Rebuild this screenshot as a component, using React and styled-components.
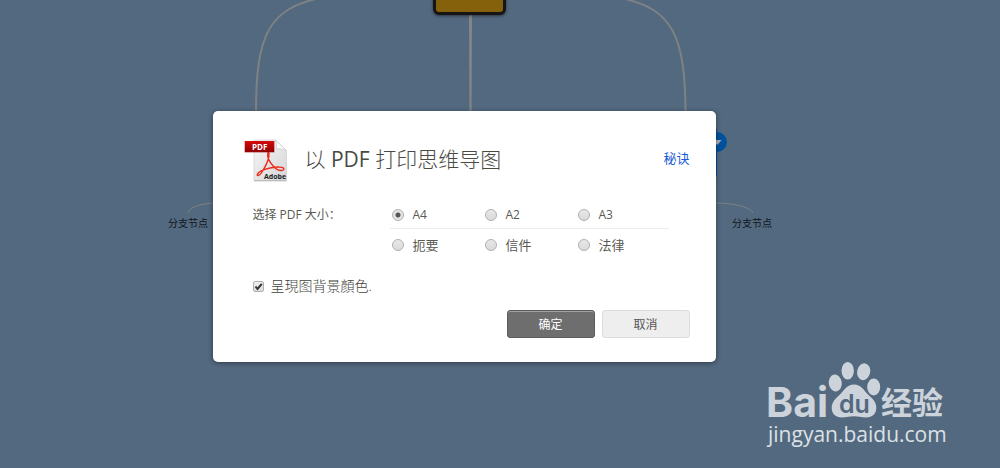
import React, { useState } from "react";
import styled, { createGlobalStyle } from "styled-components";

const SIZES = [
  [
    { value: "a4", label: "A4" },
    { value: "a2", label: "A2" },
    { value: "a3", label: "A3" },
  ],
  [
    { value: "executive", label: "扼要" },
    { value: "letter", label: "信件" },
    { value: "legal", label: "法律" },
  ],
];

const MindMap = () => (
  <MapLayer>
    <svg width="1000" height="468" fill="none" stroke="#7e8284">
      <path d="M320 -2C268 9 256 36 256 112" strokeWidth="2" />
      <path d="M621 -2C673 9 685 36 685.500 112" strokeWidth="2" />
      <path d="M469 12h3l-0.500 100h-2z" fill="#84868a" stroke="none" />
      <path d="M188 213C190 206 202 204 214 203" />
      <path d="M714 203C730 203 750 206 753 213" />
      <rect x="640" y="128" width="77" height="49" rx="3" fill="#00519b" stroke="none" />
      <circle cx="717" cy="142" r="10" fill="#00519b" stroke="none" />
      <path d="M712 140h9.500l-4 5z" fill="#a9adb5" stroke="none" />
    </svg>
    <RootNode />
    <BranchLabel $x={168}>分支节点</BranchLabel>
    <BranchLabel $x={732}>分支节点</BranchLabel>
  </MapLayer>
);

const PdfIcon = () => (
  <svg width="44" height="44" viewBox="244 138 44 44" aria-hidden="true">
    <defs>
      <linearGradient id="page" x1="0" y1="0" x2="1" y2="1">
        <stop offset="0" stopColor="#f6f6f6" />
        <stop offset="1" stopColor="#d6d6d6" />
      </linearGradient>
      <linearGradient id="banner" x1="0" y1="0" x2="0" y2="1">
        <stop offset="0" stopColor="#d60a0a" />
        <stop offset="1" stopColor="#8e0000" />
      </linearGradient>
    </defs>
    <path
      d="M254 140h21.500l11 10.500V180.500H254z"
      fill="url(#page)"
      stroke="#cfcfcf"
      strokeWidth="0.700"
    />
    <path d="M254 180.800h32.500" stroke="#a5a5a5" strokeWidth="0.800" />
    <path
      d="M275.500 140.200q2 5 0.500 8.500q5-0.500 10.300 1.800z"
      fill="#fff"
      stroke="#c4c4c4"
      strokeWidth="0.600"
    />
    <path
      d="M268 152.500C266.500 157 270 163 275 168C279 171.500 283.500 171 283.800 169C284 166.800 277 166.500 270 168C264 169.400 258 172 257.300 174.500C257 176.300 259.500 176 262 172C265.500 166.500 269.500 158 269 153"
      fill="none"
      stroke="#ee2a1c"
      strokeWidth="1.400"
      strokeLinecap="round"
    />
    <rect x="244.700" y="141" width="29.600" height="11.300" fill="url(#banner)" />
    <text
      x="252"
      y="149.500"
      fill="#fff"
      fontFamily="'Open Sans', sans-serif"
      fontSize="8"
      fontWeight="700"
    >
      PDF
    </text>
    <text
      x="264"
      y="179"
      fill="#222"
      fontFamily="'Open Sans', sans-serif"
      fontSize="7"
      fontWeight="700"
    >
      Adobe
    </text>
  </svg>
);

const BaiduMark = () => (
  <Watermark>
    <svg width="180" height="60" viewBox="768 360 180 60" aria-label="Baidu 经验">
      <g fill="#ccd3da">
        <text x="766" y="417" fontFamily="Inter, sans-serif" fontSize="41" fontWeight="700">
          Bai
        </text>
        <ellipse cx="835.300" cy="383" rx="6.500" ry="8.500" transform="rotate(-8 835.300 383)" />
        <ellipse cx="847.700" cy="370.700" rx="6.200" ry="8.800" />
        <ellipse cx="863.700" cy="371.700" rx="6.500" ry="8.500" transform="rotate(12 863.700 371.700)" />
        <ellipse cx="873.700" cy="387" rx="6.500" ry="8.500" />
        <path d="M854 384.500C861 384.500 863.500 390 868 394.500C872.500 398.500 876.500 402 876.300 408C876.200 414 872 417.500 866.500 417.500C861 417.500 858 416.300 854 416.300C850 416.300 847 417.500 841.500 417.500C836 417.500 831.800 414 831.700 408C831.600 402 835.500 398.500 840 394.500C844.500 390 847 384.500 854 384.500z" />
        <text
          x="881"
          y="414"
          fontFamily="'Noto Sans CJK SC', sans-serif"
          fontSize="31"
          fontWeight="700"
        >
          经验
        </text>
      </g>
      <text x="839" y="413" fill="#53697f" fontFamily="Inter, sans-serif" fontSize="25" fontWeight="600">
        du
      </text>
    </svg>
    <span>jingyan.baidu.com</span>
  </Watermark>
);

const App = () => {
  const [size, setSize] = useState("a4");
  const [background, setBackground] = useState(true);

  return (
    <Screen>
      <GlobalStyle />
      <MindMap />
      <Dialog role="dialog" aria-labelledby="dialog-title">
        <Header>
          <PdfIcon />
          <h1 id="dialog-title">
            以 <b>PDF</b> 打印思维导图
          </h1>
          <a href="#tips">秘诀</a>
        </Header>
        <SizeField role="radiogroup" aria-labelledby="size-label">
          <span id="size-label">选择 PDF 大小：</span>
          <SizeRows>
            {SIZES.map((row, i) => (
              <SizeRow key={i}>
                {row.map(({ value, label }) => (
                  <label key={value}>
                    <Radio
                      type="radio"
                      name="size"
                      value={value}
                      checked={size === value}
                      onChange={() => setSize(value)}
                    />
                    {label}
                  </label>
                ))}
              </SizeRow>
            ))}
          </SizeRows>
        </SizeField>
        <CheckLabel>
          <CheckWrap>
            <Checkbox
              type="checkbox"
              checked={background}
              onChange={(e) => setBackground(e.target.checked)}
            />
            {background && (
              <svg width="11" height="11" viewBox="0 0 11 11" aria-hidden="true">
                <path d="M2.500 5.500L4.500 8L8.800 2.800" fill="none" stroke="#333" strokeWidth="2" />
              </svg>
            )}
          </CheckWrap>
          呈現图背景顏色.
        </CheckLabel>
        <Footer>
          <Button type="button" $primary>
            确定
          </Button>
          <Button type="button">取消</Button>
        </Footer>
      </Dialog>
      <BaiduMark />
    </Screen>
  );
};

const GlobalStyle = createGlobalStyle`
  * {
    box-sizing: border-box;
  }
  body {
    margin: 0;
    background: #53697f;
    color: #5a5a52;
    font-family: "Open Sans", "Noto Sans CJK SC", sans-serif;
    font-size: 12px;
  }
`;

const Screen = styled.div`
  position: relative;
  display: flex;
  justify-content: center;
  align-items: flex-start;
  min-height: 100vh;
  padding: 111px 72px 0 0;
  overflow: hidden;
`;

const MapLayer = styled.div`
  position: absolute;
  inset: 0;

  svg {
    display: block;
  }
`;

const RootNode = styled.div`
  position: absolute;
  top: -30px;
  left: 433px;
  width: 73px;
  height: 45px;
  border: 3px solid #151515;
  border-radius: 6px;
  background: #86610c;
  box-shadow: 0 1px 3px rgba(0, 0, 0, 0.5);
`;

const BranchLabel = styled.span`
  position: absolute;
  top: 216px;
  left: ${({ $x }) => $x}px;
  color: #10151c;
  font-size: 10px;
  line-height: 14px;
`;

const Dialog = styled.section`
  position: relative;
  width: 100%;
  max-width: 503px;
  padding: 27px 26px 24px 31px;
  border-radius: 5px;
  background: #fff;
  box-shadow: 0 1px 5px rgba(0, 0, 0, 0.45);
`;

const Header = styled.header`
  display: flex;
  align-items: center;

  h1 {
    flex: 1;
    margin: 0 0 0 17px;
    padding-bottom: 2px;
    color: #4a4a44;
    font-size: 21px;
    font-weight: 300;
    line-height: 28px;
  }
  b {
    font-weight: 400;
  }
  a {
    padding-bottom: 4px;
    color: #1a5cd6;
    font-size: 13px;
    line-height: 16px;
    text-decoration: none;
  }
`;

const SizeField = styled.div`
  display: flex;
  margin-top: 19px;
  padding-left: 9px;

  > span {
    flex: 0 0 137px;
    line-height: 28px;
  }
`;

const SizeRows = styled.div`
  flex: 1;
  margin-right: 21px;
`;

const SizeRow = styled.div`
  display: grid;
  grid-template-columns: repeat(3, 1fr);
  height: 27px;
  font-size: 12px;

  & + & {
    height: 32px;
    border-top: 1px solid #ececec;
    font-size: 13px;
  }
  label {
    display: flex;
    align-items: center;
    gap: 9px;
    padding-left: 2px;
  }
`;

const Radio = styled.input`
  appearance: none;
  width: 12px;
  height: 12px;
  margin: 0;
  border: 1px solid #b0b0b0;
  border-radius: 50%;
  background: ${({ checked }) =>
    checked
      ? "radial-gradient(circle, #555 2px, #e4e4e4 3px)"
      : "linear-gradient(#e8e8e8, #dadada)"};
`;

const CheckLabel = styled.label`
  display: flex;
  align-items: center;
  gap: 7px;
  margin-top: 16px;
  padding-left: 9px;
  color: #44443c;
  font-size: 14px;
  font-weight: 300;
  line-height: 20px;
`;

const CheckWrap = styled.span`
  display: grid;
  width: 11px;
  height: 11px;

  > * {
    grid-area: 1 / 1;
  }
  svg {
    pointer-events: none;
  }
`;

const Checkbox = styled.input`
  appearance: none;
  width: 11px;
  height: 11px;
  margin: 0;
  border: 1px solid #b0b0b0;
  border-radius: 2px;
  background: linear-gradient(#f0f0f0, #dcdcdc);
`;

const Footer = styled.footer`
  display: flex;
  justify-content: flex-end;
  gap: 7px;
  margin-top: 14px;
`;

const Button = styled.button`
  width: 88px;
  height: 28px;
  padding: 0;
  border: 1px solid ${({ $primary }) => ($primary ? "#5c5c5c" : "#dcdcdc")};
  border-radius: 3px;
  background: ${({ $primary }) => ($primary ? "#6e6e6e" : "#eeeeee")};
  box-shadow: ${({ $primary }) =>
    $primary ? "inset 0 1px 0 #a0a0a0" : "none"};
  color: ${({ $primary }) => ($primary ? "#fff" : "#555")};
  font: inherit;
`;

const Watermark = styled.div`
  position: absolute;
  right: 52px;
  bottom: 20px;
  display: flex;
  flex-direction: column;
  color: #dce1e6;
  font-size: 21px;
  line-height: 28px;

  svg {
    overflow: visible;
  }
`;

export default App;
